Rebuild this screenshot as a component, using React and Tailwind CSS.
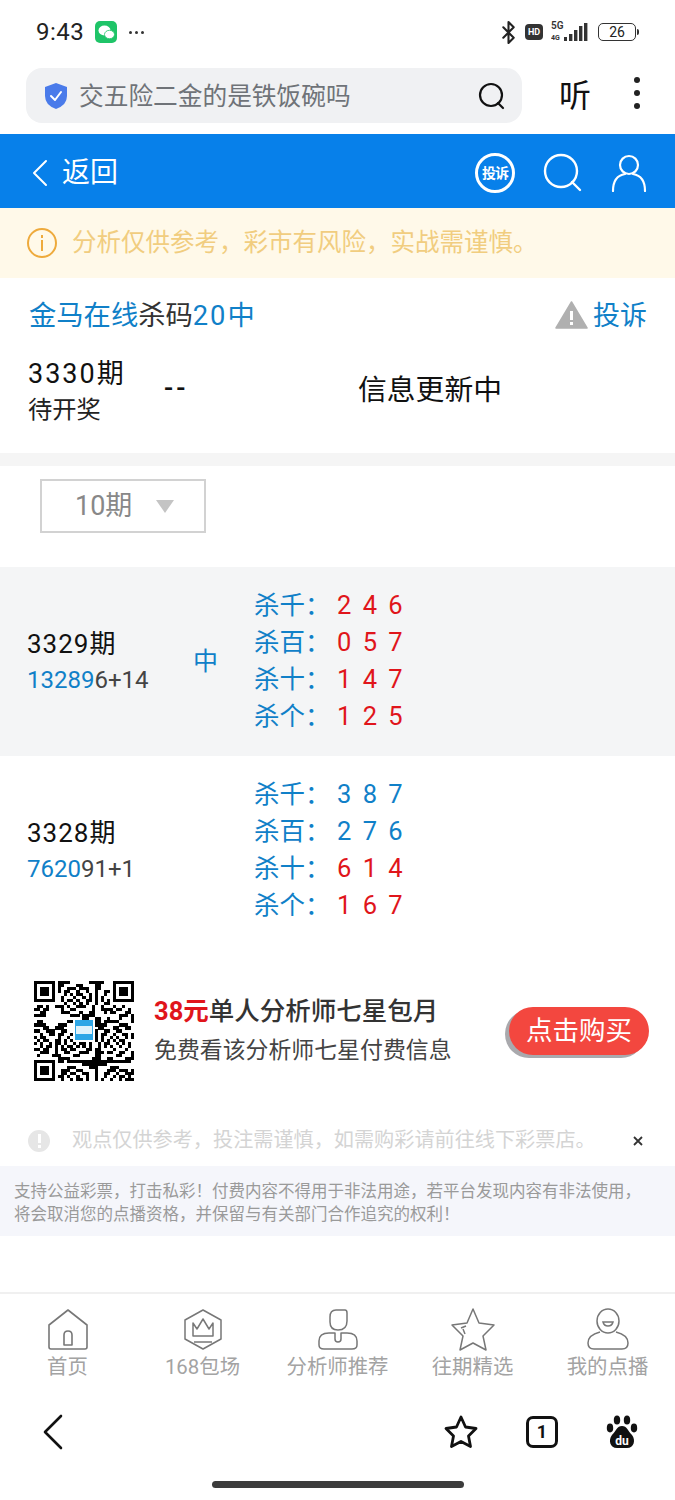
import { Bluetooth } from 'lucide-react'

const ROWS = [
  {
    issue: '3329期', hit: '13289', rest: '6+14', mark: '中', shaded: true,
    kills: [
      { label: '杀千：', nums: '2 4 6', red: true },
      { label: '杀百：', nums: '0 5 7', red: true },
      { label: '杀十：', nums: '1 4 7', red: true },
      { label: '杀个：', nums: '1 2 5', red: true },
    ],
  },
  {
    issue: '3328期', hit: '7620', rest: '91+1', mark: '', shaded: false,
    kills: [
      { label: '杀千：', nums: '3 8 7', red: false },
      { label: '杀百：', nums: '2 7 6', red: false },
      { label: '杀十：', nums: '6 1 4', red: true },
      { label: '杀个：', nums: '1 6 7', red: true },
    ],
  },
]

const TABS = [
  { label: '首页', Icon: HomeIcon },
  { label: '168包场', Icon: CrownIcon },
  { label: '分析师推荐', Icon: AnalystIcon },
  { label: '往期精选', Icon: StarTabIcon },
  { label: '我的点播', Icon: UserTabIcon },
]

function HomeIcon() {
  return (
    <svg width="44" height="44" viewBox="0 0 44 44" fill="none" stroke="#777" strokeWidth="1.6" strokeLinejoin="round">
      <path d="M3 17 L22 2 L41 17 V39 Q41 41 39 41 H5 Q3 41 3 39 Z" />
      <path d="M18 37 V27 Q18 23 22 23 Q26 23 26 27 V37 Z" />
    </svg>
  )
}

function CrownIcon() {
  return (
    <svg width="44" height="44" viewBox="0 0 44 44" fill="none" stroke="#777" strokeWidth="1.5" strokeLinejoin="round">
      <path d="M22 2 L40 12 V31 L22 41 L4 31 V12 Z" />
      <path d="M12 15 L16 21 L22 11 L28 21 L32 15 V28 H12 Z" />
      <path d="M13 34 H31" />
    </svg>
  )
}

function AnalystIcon() {
  return (
    <svg width="44" height="44" viewBox="0 0 44 44" fill="none" stroke="#777" strokeWidth="1.5" strokeLinejoin="round">
      <path d="M20 2 H29 Q31 2 31 5 V13 Q31 22 22 22 Q14 22 14 14 V9 Q14 2 20 2 Z" />
      <path d="M13 25 Q3 25 3 33 V37 Q3 41 8 41 H36 Q41 41 41 37 V33 Q41 25 31 25 H25 V31 Q25 34 22 34 Q19 34 19 31 V25 Z" />
    </svg>
  )
}

function StarTabIcon() {
  return (
    <svg width="46" height="44" viewBox="0 0 46 44" fill="none" stroke="#777" strokeWidth="1.5" strokeLinejoin="round">
      <path d="M23 1 L29 15 L44 17 L33 28 L36 42 L23 35 L10 42 L13 28 L2 17 L17 15 Z" />
      <path d="M11 20 L16 18 M13 21 L15 26" />
    </svg>
  )
}

function UserTabIcon() {
  return (
    <svg width="44" height="44" viewBox="0 0 44 44" fill="none" stroke="#777" strokeWidth="1.5">
      <ellipse cx="22" cy="13" rx="11" ry="12" />
      <path d="M17 14 H27 Q26 18 22 18 Q18 18 17 14 Z" />
      <path d="M14 24 Q2 27 2 35 Q2 41 8 41 H36 Q42 41 42 35 Q42 27 30 24" />
    </svg>
  )
}

// deterministic fake QR modules
function QrCode() {
  const size = 33
  const cells = []
  const inFinder = (x, y) => (x < 8 && y < 8) || (x > size - 9 && y < 8) || (x < 8 && y > size - 9)
  for (let y = 0; y < size; y++) {
    for (let x = 0; x < size; x++) {
      if (inFinder(x, y)) continue
      if (x > 12 && x < 20 && y > 12 && y < 20) continue
      const h = (x * 7 + y * 13 + ((x * y) % 7) * 5 + ((x ^ y) * 3)) % 11
      if (h < 5) cells.push(<rect key={`${x}-${y}`} x={x} y={y} width="1.02" height="1.02" />)
    }
  }
  const finder = (x, y) => (
    <g key={`f${x}${y}`}>
      <path fillRule="evenodd" d={`M${x} ${y}h7v7h-7zM${x + 1} ${y + 1}v5h5v-5z`} />
      <rect x={x + 2} y={y + 2} width="3" height="3" />
    </g>
  )
  return (
    <svg width="100" height="100" viewBox="0 0 33 33" fill="#000" shapeRendering="crispEdges" className="shrink-0">
      {cells}
      {finder(0, 0)}
      {finder(26, 0)}
      {finder(0, 26)}
      <rect x="13.5" y="13" width="6" height="6.5" fill="#2ea6e6" />
      <rect x="14" y="15" width="5" height="2.4" fill="#dff2fb" />
    </svg>
  )
}

function StatusBar() {
  return (
    <div className="h-[64px] flex items-center pl-[36px] pr-[36px] text-[#222]">
      <span className="text-[24px] leading-none tracking-[0.5px]">9:43</span>
      <div className="ml-[11px] w-[22px] h-[22px] rounded-[5px] bg-[#1fc468] flex items-center justify-center">
        <svg width="17" height="15" viewBox="0 0 17 15" fill="#fff">
          <ellipse cx="6.5" cy="5.5" rx="6" ry="5" />
          <ellipse cx="11.5" cy="9.5" rx="5" ry="4.2" stroke="#1fc468" strokeWidth="0.8" />
        </svg>
      </div>
      <span className="ml-[12px] flex gap-[3px]">
        <i className="w-[3px] h-[3px] rounded-full bg-[#333]" />
        <i className="w-[3px] h-[3px] rounded-full bg-[#333]" />
        <i className="w-[3px] h-[3px] rounded-full bg-[#333]" />
      </span>
      <div className="ml-auto flex items-center">
        <Bluetooth size={25} strokeWidth={2} color="#222" />
        <div className="ml-[4px] w-[18px] h-[16px] rounded-[4px] bg-[#333] text-white text-[9px] font-bold flex items-center justify-center leading-none">HD</div>
        <svg className="ml-[8px]" width="40" height="24" viewBox="0 0 40 24" fill="#333">
          <text x="0" y="9" fontSize="10" fontWeight="600" fontFamily="Roboto">5G</text>
          <text x="0" y="20" fontSize="7" fontWeight="700" fontFamily="Roboto">4G</text>
          <rect x="13" y="17" width="3" height="4" />
          <rect x="18" y="14" width="3.4" height="7" />
          <rect x="23" y="10" width="3.4" height="11" />
          <rect x="28" y="6" width="3.4" height="15" />
          <rect x="33" y="3" width="3.4" height="18" />
        </svg>
        <div className="ml-[7px] w-[38px] h-[18px] rounded-[5px] border border-[#333] flex items-center justify-center text-[14px] leading-none">26</div>
        <i className="ml-[1px] w-[2px] h-[6px] bg-[#333] rounded-r" />
      </div>
    </div>
  )
}

function AddressBar() {
  return (
    <div className="h-[70px] flex items-start pl-[26px] pt-[4px]">
      <div className="w-[496px] h-[55px] rounded-[16px] bg-[#f0f1f3] flex items-center pl-[18px] pr-[16px]">
        <svg width="24" height="28" viewBox="0 0 24 28">
          <path d="M12 1 L23 5 V14 Q23 23 12 27 Q1 23 1 14 V5 Z" fill="#4a7bea" />
          <path d="M7 14 L11 18 L17 10" fill="none" stroke="#fff" strokeWidth="2" strokeLinecap="round" strokeLinejoin="round" />
        </svg>
        <span className="ml-[11px] pt-[4px] text-[24.7px] leading-none text-[#6f7378]">交五险二金的是铁饭碗吗</span>
        <svg className="ml-auto" width="28" height="28" viewBox="0 0 28 28" fill="none" stroke="#111" strokeWidth="2.2" strokeLinecap="round">
          <circle cx="13" cy="13" r="11" />
          <path d="M20 21 L25 26" />
        </svg>
      </div>
      <span className="ml-[37px] mt-[12px] text-[32px] leading-none text-[#111]">听</span>
      <div className="ml-[43px] mt-[9px] flex flex-col gap-[7px]">
        <i className="w-[6px] h-[6px] rounded-full bg-[#222]" />
        <i className="w-[6px] h-[6px] rounded-full bg-[#222]" />
        <i className="w-[6px] h-[6px] rounded-full bg-[#222]" />
      </div>
    </div>
  )
}

function BlueHeader() {
  return (
    <div className="h-[74px] bg-[#0780ea] flex items-center pl-[32px] pr-[28px] pt-[4px] text-white">
      <svg width="16" height="28" viewBox="0 0 16 28" fill="none" stroke="#fff" strokeWidth="2" strokeLinecap="round" strokeLinejoin="round">
        <path d="M14 2 L2 14 L14 26" />
      </svg>
      <span className="ml-[14px] text-[28px] leading-none">返回</span>
      <div className="ml-auto w-[40px] h-[40px] rounded-full border-[3px] border-white flex items-center justify-center text-[14px] font-bold leading-none whitespace-nowrap tracking-[-1px]">投诉</div>
      <svg className="ml-[28px]" width="40" height="40" viewBox="0 0 40 40" fill="none" stroke="#fff" strokeWidth="2.4" strokeLinecap="round">
        <circle cx="18" cy="18" r="16" />
        <path d="M29 29 L37 37" />
      </svg>
      <svg className="ml-[28px]" width="36" height="38" viewBox="0 0 36 38" fill="none" stroke="#fff" strokeWidth="2.2" strokeLinecap="round">
        <circle cx="18" cy="11" r="9" />
        <path d="M2 37 Q2 22 14 20 M34 37 Q34 22 22 20" />
      </svg>
    </div>
  )
}

function Notice() {
  return (
    <div className="h-[70px] bg-[#fff9e9] flex items-center pl-[27px]">
      <div className="w-[30px] h-[30px] rounded-full border-[2px] border-[#eeaa3c] flex flex-col items-center justify-center gap-[2px]">
        <i className="w-[2px] h-[3px] bg-[#eeaa3c]" />
        <i className="w-[2px] h-[11px] bg-[#eeaa3c]" />
      </div>
      <span className="ml-[15px] text-[24.5px] leading-none text-[#f1cd7f]">分析仅供参考，彩市有风险，实战需谨慎。</span>
    </div>
  )
}

function KillRow({ row }) {
  return (
    <div className={`h-[189px] flex items-center pl-[27px] ${row.shaded ? 'bg-[#f4f5f6]' : 'bg-white'}`}>
      <div className="w-[166px] shrink-0">
        <div className="text-[26px] leading-[36px] text-[#111] tracking-[1px]">{row.issue}</div>
        <div className="text-[24px] leading-[36px] text-[#444]">
          <span className="text-[#1080c8]">{row.hit}</span>{row.rest}
        </div>
      </div>
      <span className="w-[61px] shrink-0 text-[25px] leading-none text-[#1080c8]">{row.mark}</span>
      <div className="flex flex-col">
        {row.kills.map((k) => (
          <div key={k.label} className="h-[37px] flex items-center text-[25.5px] leading-none">
            <span className="w-[83px] text-[#1080c8]">{k.label}</span>
            <span className={`tracking-[2.5px] whitespace-pre ${k.red ? 'text-[#e0151b]' : 'text-[#1080c8]'}`}>{k.nums}</span>
          </div>
        ))}
      </div>
    </div>
  )
}

function Promo() {
  return (
    <div className="h-[134px] flex items-start pl-[34px] pr-[26px]">
      <QrCode />
      <div className="ml-[20px] pt-[13px]">
        <div className="text-[25.5px] leading-[34px] font-medium text-[#333] whitespace-nowrap">
          <span className="text-[#e0151b] font-bold">38元</span>单人分析师七星包月
        </div>
        <div className="mt-[7px] text-[22.9px] leading-[32px] text-[#444] whitespace-nowrap">免费看该分析师七星付费信息</div>
      </div>
      <div className="ml-auto mt-[26px] w-[140px] h-[48px] rounded-[24px] bg-[#f3473f] shadow-[-4px_3px_0_#a9a9ad] flex items-center justify-center text-[26.5px] leading-none text-white whitespace-nowrap">点击购买</div>
    </div>
  )
}

function TipLine() {
  return (
    <div className="h-[51px] flex items-center pl-[28px] pr-[32px]">
      <div className="w-[22px] h-[22px] rounded-full bg-[#e6e6e6] flex flex-col items-center justify-center gap-[2px]">
        <i className="w-[3px] h-[9px] bg-white" />
        <i className="w-[3px] h-[3px] bg-white" />
      </div>
      <span className="ml-[22px] text-[20.15px] leading-none text-[#d4d4d4] whitespace-nowrap">观点仅供参考，投注需谨慎，如需购彩请前往线下彩票店。</span>
      <svg className="ml-auto" width="10" height="10" viewBox="0 0 10 10" fill="none" stroke="#333" strokeWidth="1.8">
        <path d="M1 1 L9 9 M9 1 L1 9" />
      </svg>
    </div>
  )
}

function TabBar() {
  return (
    <div className="h-[102px] border-t-[2px] border-[#f0f0f0] grid grid-cols-5 pt-[14px]">
      {TABS.map(({ label, Icon }) => (
        <div key={label} className="flex flex-col items-center">
          <Icon />
          <span className="mt-[2px] text-[20.4px] leading-[26px] text-[#a3a3a3] whitespace-nowrap">{label}</span>
        </div>
      ))}
    </div>
  )
}

function BottomNav() {
  return (
    <div className="h-[76px] flex items-center pl-[42px] pr-[37px]">
      <svg width="22" height="36" viewBox="0 0 22 36" fill="none" stroke="#111" strokeWidth="2.6" strokeLinecap="round" strokeLinejoin="round">
        <path d="M19 2 L3 18 L19 34" />
      </svg>
      <svg className="ml-auto" width="34" height="34" viewBox="0 0 34 34" fill="none" stroke="#111" strokeWidth="2.8" strokeLinejoin="round">
        <path d="M17 2 L21.5 12 L32 13.5 L24.5 21 L26.5 31.5 L17 26.5 L7.5 31.5 L9.5 21 L2 13.5 L12.5 12 Z" />
      </svg>
      <div className="ml-[48px] w-[32px] h-[32px] rounded-[7px] border-[3px] border-[#111] flex items-center justify-center text-[18px] font-bold leading-none text-[#111]">1</div>
      <svg className="ml-[48px]" width="32" height="34" viewBox="0 0 32 34" fill="#111">
        <ellipse cx="11" cy="5" rx="3.2" ry="4.6" />
        <ellipse cx="21" cy="5" rx="3.2" ry="4.6" />
        <ellipse cx="4" cy="13" rx="3.2" ry="4.4" />
        <ellipse cx="28" cy="13" rx="3.2" ry="4.4" />
        <path d="M16 11 C21 11 22 16 26 20 C30 25 28 33 21 33 H11 C4 33 2 25 6 20 C10 16 11 11 16 11 Z" />
        <text x="16" y="30" textAnchor="middle" fontSize="12" fontWeight="700" fontFamily="Roboto" fill="#fff">du</text>
      </svg>
    </div>
  )
}

export default function App() {
  return (
    <div className="w-[675px] h-[1500px] bg-white overflow-hidden flex flex-col font-['Roboto','Noto_Sans_CJK_SC',sans-serif]">
      <StatusBar />
      <AddressBar />
      <BlueHeader />
      <Notice />

      {/* Title */}
      <div className="h-[73px] flex items-center pl-[29px] pr-[28px]">
        <span className="pt-[4px] text-[27.3px] leading-none text-[#1080c8]">
          金马在线<span className="text-[#333]">杀码</span><span className="tracking-[2px]">20</span>中
        </span>
        <svg className="ml-auto" width="33" height="28" viewBox="0 0 33 28">
          <path d="M16.5 1 L32 27 H1 Z" fill="#b0b0b0" stroke="#b0b0b0" strokeWidth="1.5" strokeLinejoin="round" />
          <rect x="15" y="10" width="3" height="9" fill="#fff" />
          <rect x="15" y="21" width="3" height="3" fill="#fff" />
        </svg>
        <span className="ml-[5px] pt-[4px] text-[27px] leading-none text-[#1080c8]">投诉</span>
      </div>

      {/* Current issue */}
      <div className="h-[102px] flex items-start pl-[28px] pt-[5px] text-[#111]">
        <div className="w-[136px] shrink-0">
          <div className="text-[27px] leading-[36px] tracking-[2px]">3330期</div>
          <div className="text-[24.3px] leading-[36px] text-[#222]">待开奖</div>
        </div>
        <span className="w-[194px] shrink-0 mt-[14px] text-[27px] leading-[36px] font-medium tracking-[3px]">--</span>
        <span className="mt-[16px] text-[28.8px] leading-[36px] whitespace-nowrap">信息更新中</span>
      </div>

      <div className="h-[13px] bg-[#f5f5f5]" />

      {/* Period select */}
      <div className="h-[101px] pl-[40px] pt-[13px]">
        <div className="w-[166px] h-[54px] border-[2px] border-[#d2d2d2] flex items-center pl-[33px]">
          <span className="text-[27px] leading-none text-[#888]">10期</span>
          <i className="ml-[24px] w-0 h-0 border-x-[9px] border-x-transparent border-t-[13px] border-t-[#c4c4c4]" />
        </div>
      </div>

      {ROWS.map((row) => <KillRow key={row.issue} row={row} />)}

      <div className="h-[36px]" />
      <Promo />
      <TipLine />
      <div className="h-[70px] bg-[#f5f6fb] px-[14px] pt-[4px] flex flex-col justify-center text-[16.5px] leading-[23px] text-[#9a9a9a] whitespace-nowrap">
        <div>支持公益彩票，打击私彩！付费内容不得用于非法用途，若平台发现内容有非法使用，</div>
        <div>将会取消您的点播资格，并保留与有关部门合作追究的权利！</div>
      </div>
      <div className="h-[56px]" />
      <TabBar />
      <BottomNav />

      <div className="flex justify-center pt-[11px]">
        <div className="w-[252px] h-[7px] rounded-full bg-[#3c3c3c]" />
      </div>
    </div>
  )
}
